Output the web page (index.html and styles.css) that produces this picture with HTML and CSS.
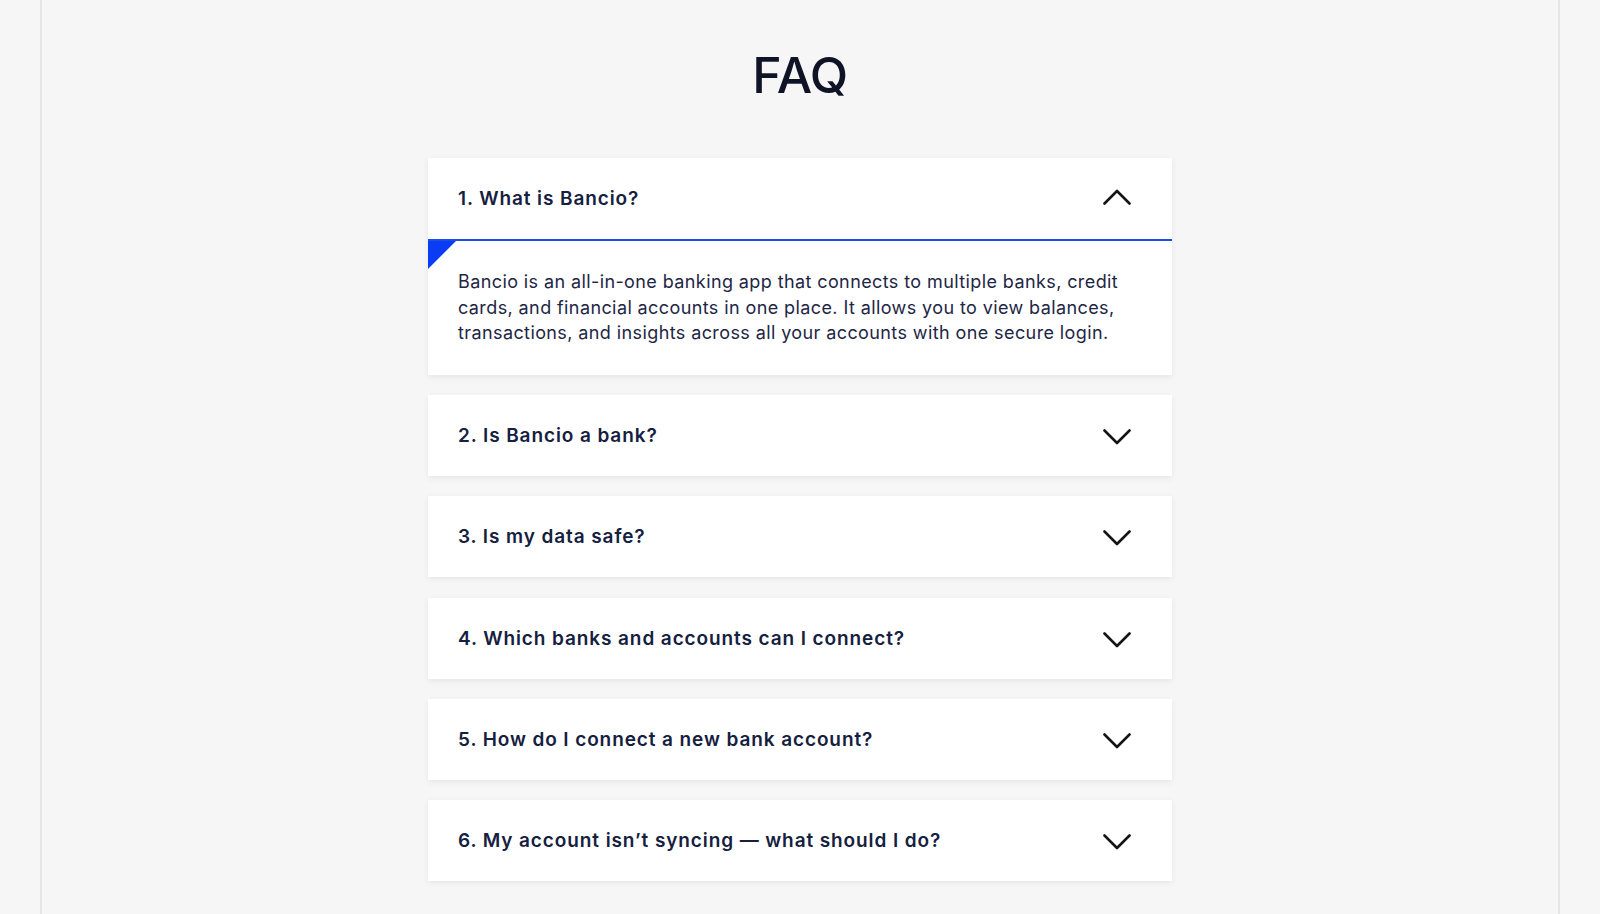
FILE: index.html
```html
<!DOCTYPE html>
<html lang="en">
<head>
  <meta charset="UTF-8" />
  <meta name="viewport" content="width=device-width, initial-scale=1.0"/>
  <title>Bancio - FAQ</title>
  <link rel="stylesheet" href="styles.css">
</head>
<body>
  <div class="page">
    <h1 class="faq-title">FAQ</h1>

    <div class="faq-list">
      <div class="faq-item open">
        <div class="faq-question">
          <span>1. What is Bancio?</span>
          <svg class="chevron up" viewBox="0 0 28 16" width="28" height="16"><polyline points="1.5,14.5 14,2 26.5,14.5" /></svg>
        </div>
        <div class="faq-answer">
          <p>Bancio is an all-in-one banking app that connects to multiple banks, credit cards, and financial accounts in one place. It allows you to view balances, transactions, and insights across all your accounts with one secure login.</p>
        </div>
      </div>

      <div class="faq-item">
        <div class="faq-question">
          <span>2. Is Bancio a bank?</span>
          <svg class="chevron" viewBox="0 0 28 16" width="28" height="16"><polyline points="1.5,1.5 14,14 26.5,1.5" /></svg>
        </div>
      </div>

      <div class="faq-item">
        <div class="faq-question">
          <span>3. Is my data safe?</span>
          <svg class="chevron" viewBox="0 0 28 16" width="28" height="16"><polyline points="1.5,1.5 14,14 26.5,1.5" /></svg>
        </div>
      </div>

      <div class="faq-item">
        <div class="faq-question">
          <span>4. Which banks and accounts can I connect?</span>
          <svg class="chevron" viewBox="0 0 28 16" width="28" height="16"><polyline points="1.5,1.5 14,14 26.5,1.5" /></svg>
        </div>
      </div>

      <div class="faq-item">
        <div class="faq-question">
          <span>5. How do I connect a new bank account?</span>
          <svg class="chevron" viewBox="0 0 28 16" width="28" height="16"><polyline points="1.5,1.5 14,14 26.5,1.5" /></svg>
        </div>
      </div>

      <div class="faq-item">
        <div class="faq-question">
          <span>6. My account isn’t syncing — what should I do?</span>
          <svg class="chevron" viewBox="0 0 28 16" width="28" height="16"><polyline points="1.5,1.5 14,14 26.5,1.5" /></svg>
        </div>
      </div>
    </div>
  </div>
</body>
</html>
```

FILE: styles.css
```css
* {
  margin: 0;
  padding: 0;
  box-sizing: border-box;
}
body {
  font-family: Inter, "Noto Sans", sans-serif;
  background-color: #f6f6f6;
  color: #141b34;
  height: 100vh;
  overflow: hidden;
}
.page {
  margin: 0 40px;
  height: 100%;
  border-left: 2px solid #e6e6e6;
  border-right: 2px solid #e6e6e6;
  padding-top: 45px;
}
.faq-title {
  text-align: center;
  font-size: 50px;
  line-height: 60px;
  font-weight: 500;
  color: #0e1326;
  letter-spacing: -0.5px;
  margin-bottom: 53px;
}
.faq-list {
  width: 744px;
  margin: 0 auto;
  display: flex;
  flex-direction: column;
  gap: 20.4px;
}
.faq-item {
  background: #fff;
  box-shadow: 0 2px 6px rgba(0, 0, 0, 0.07);
}
.faq-question {
  height: 81px;
  padding: 0 41px 0 30px;
  display: flex;
  justify-content: space-between;
  align-items: center;
  font-size: 19px;
  font-weight: 600;
  letter-spacing: 0.9px;
  color: #152040;
}
.chevron {
  margin-top: 3px;
  fill: none;
  stroke: #141414;
  stroke-width: 2.6;
  stroke-linecap: round;
  stroke-linejoin: round;
}
.chevron.up {
  margin-top: -4px;
}
.faq-item.open .faq-question {
  border-bottom: 2px solid #1a4fe6;
  height: 83px;
}
.faq-answer {
  position: relative;
  padding: 28px 40px 29px 30px;
  font-size: 18px;
  line-height: 25.5px;
  letter-spacing: 0.4px;
  color: #1e2644;
}
.faq-answer::before {
  content: "";
  position: absolute;
  top: 0;
  left: 0;
  border-top: 28px solid #0a3cf5;
  border-right: 28px solid transparent;
}
```
